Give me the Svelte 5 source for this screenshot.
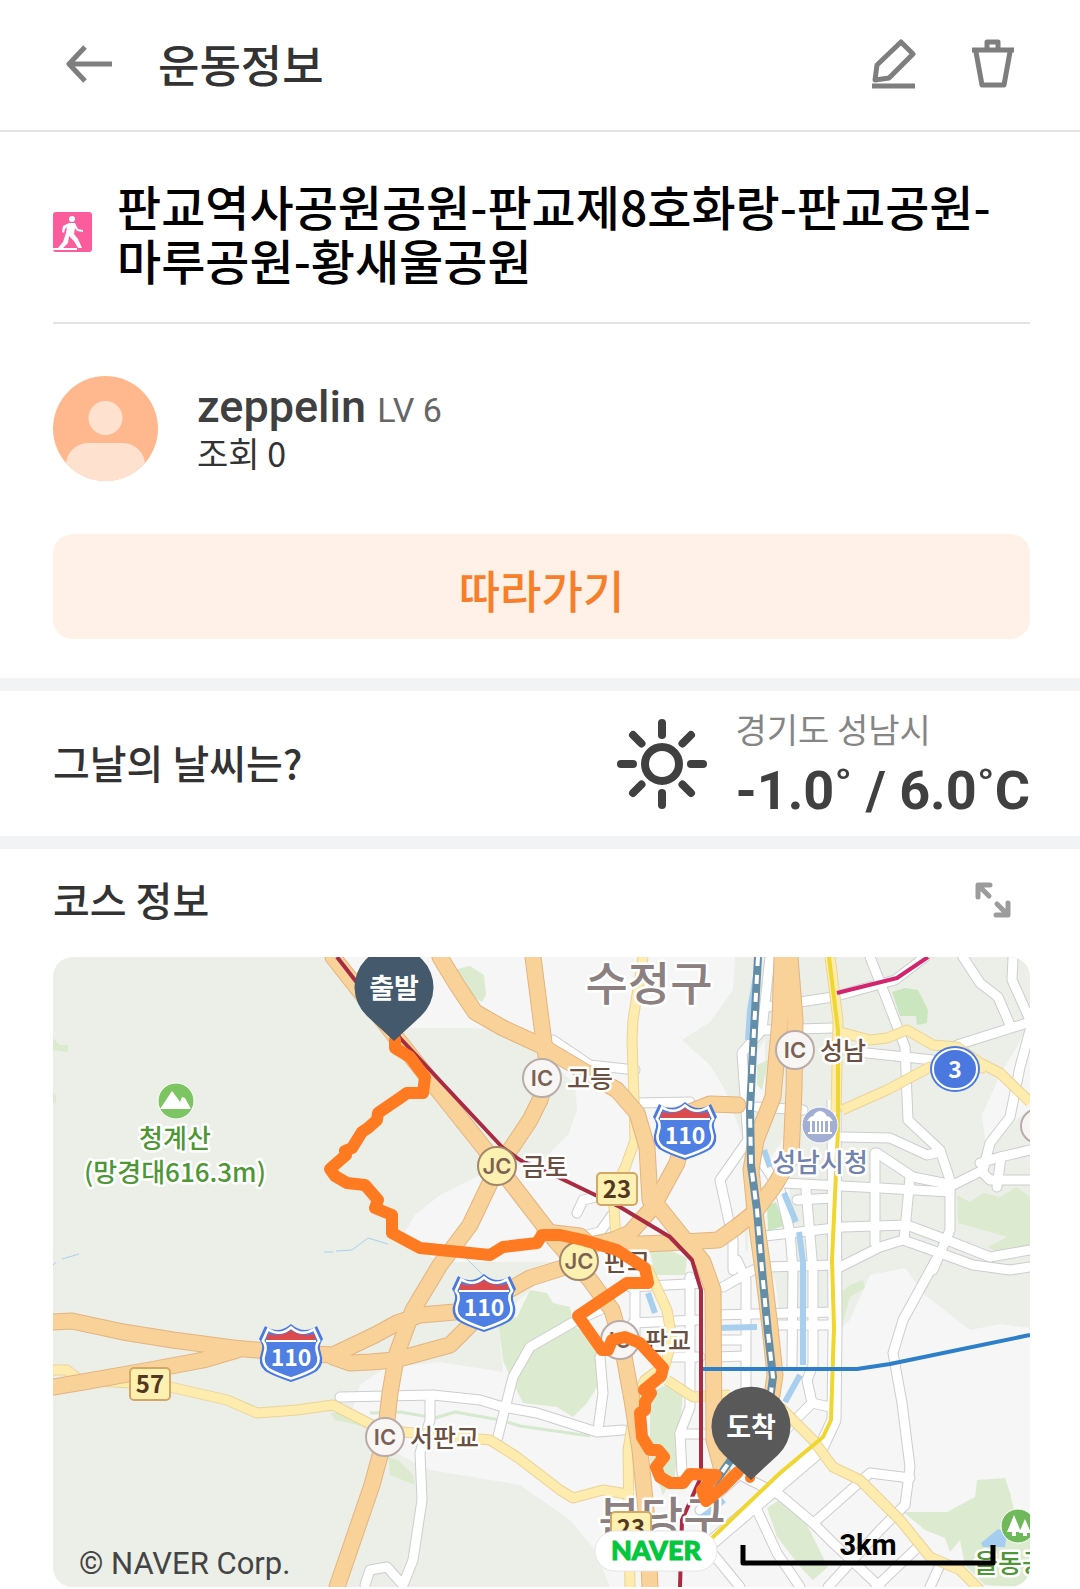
<script lang="ts">
	const workout = {
		title: '판교역사공원공원-판교제8호화랑-판교공원-마루공원-황새울공원',
		user: 'zeppelin',
		level: 6,
		views: 0
	};

	const weather = { place: '경기도 성남시', low: -1, high: 6 };

	// map shapes, all in the same coordinates as the viewBox
	const hills = [
		'53,957 335,957 400,1028 470,1028 520,1030 575,1085 577,1110 568,1135 545,1158 480,1175 440,1195 415,1215 400,1240 440,1262 560,1262 530,1290 498,1320 503,1372 440,1362 385,1368 360,1385 352,1410 390,1450 430,1470 520,1485 570,1520 595,1550 610,1587 53,1587',
		'735,957 1030,957 1030,1328 1000,1324 970,1330 925,1295 905,1268 870,1275 850,1320 840,1328 830,1310 780,1315 775,1280 745,1250 745,1150 740,1130 725,1090 710,1065 682,1040 710,1022 733,990'
	];
	const clearings = [
		'1030,1020 1018,1045 1000,1075 982,1115 985,1140 1000,1130 1030,1110',
		'748,1190 790,1130 790,1270 748,1270',
		'752,1060 765,1040 765,1110 752,1110'
	];
	const parks = [
		'453,970 470,966 484,975 486,995 482,1002 470,995',
		'757,1065 768,1060 762,1090 757,1085',
		'957,1195 970,1202 983,1193 1000,1197 1017,1187 1030,1197 1030,1247 997,1252 988,1247 1007,1237 983,1230 958,1223',
		'840,1293 850,1285 863,1280 865,1288 850,1297 842,1325',
		'903,1512 947,1512 975,1497 977,1480 1005,1478 1010,1493 1014,1510 1030,1530 1030,1587 985,1585 965,1565 960,1540 950,1552 945,1538 925,1530',
		'767,1508 782,1498 803,1517 828,1567 813,1580 803,1570 777,1537',
		'498,1320 517,1317 530,1290 547,1293 553,1303 570,1307 573,1325 600,1345 600,1357 597,1387 587,1403 573,1417 557,1407 523,1403 510,1377 503,1360',
		'650,1393 670,1383 683,1393 680,1427 675,1475 663,1495 650,1460',
		'650,1252 670,1250 687,1258 685,1275 655,1275',
		'53,1038 60,1045 68,1045 68,1052 53,1050',
		'53,1093 56,1095 56,1103 53,1104',
		'388,1457 398,1460 413,1475 415,1485 390,1475',
		'330,1413 345,1413 372,1424 370,1428 335,1420'
	];
	const groves = [
		'892,992 905,988 918,990 928,1010 927,1023 917,1025 916,1016 900,1016',
		'767,1206 776,1202 784,1226 768,1231'
	];
	const streams = [
		'784,1193 796,1222',
		'799,1232 803,1262 803,1365',
		'764,1150 770,1167',
		'800,1375 785,1402',
		'715,1328 757,1327',
		'648,1293 655,1313',
		'758,965 750,1010 748,1040',
		'724,1500 710,1512 700,1518'
	];
	const streets = [
		'553,1040 590,1065 635,1070',
		'637,1103 690,1102',
		'577,1213 583,1200 605,1195',
		'587,1235 600,1232 612,1215',
		'767,1007 833,997 895,980 925,957',
		'870,957 887,1000 905,1047 908,1120 940,1150 950,1180 950,1230 933,1270',
		'963,957 980,983 998,997 1010,1025',
		'1013,957 1012,980 1030,1020',
		'957,1045 1030,1022',
		'867,1053 933,1060',
		'765,1030 833,1028',
		'770,957 762,1030 742,1053 748,1140 720,1180 733,1240 733,1270',
		'757,1107 803,1110',
		'843,1137 890,1138 927,1155 940,1152',
		'877,1153 913,1177 953,1185 983,1170 990,1143 1010,1117 1020,1067 1030,1030',
		'980,1163 1000,1157 1030,1150',
		'983,1173 990,1180 1030,1180',
		'1001,1157 997,1187',
		'783,1183 880,1188 950,1192',
		'797,1200 833,1198',
		'765,1236 843,1227 907,1225 947,1240 990,1257 1030,1250',
		'875,1153 875,1243',
		'910,1177 904,1240',
		'840,1267 880,1247 903,1240 940,1253 973,1265 1010,1270 1030,1267',
		'767,1267 833,1265',
		'755,1150 780,1190 790,1233 793,1270 792,1365',
		'806,1190 813,1270 813,1365 807,1380 812,1403 830,1407',
		'812,1403 760,1456 700,1510',
		'737,1260 746,1280 746,1400',
		'723,1287 753,1270',
		'715,1315 835,1312',
		'715,1340 745,1340',
		'715,1357 745,1356',
		'775,1325 835,1325',
		'937,1258 903,1320 893,1353 902,1403 910,1467 905,1505 880,1530 828,1587',
		'817,1520 870,1473 910,1478',
		'740,1475 780,1495 813,1523 833,1543 880,1587',
		'757,1510 777,1553 800,1587',
		'700,1538 740,1587',
		'920,1545 876,1587',
		'940,1565 930,1587',
		'340,1397 433,1395 480,1400 503,1407 537,1413 597,1432 623,1430',
		'497,1440 513,1377 530,1347 577,1320 600,1310',
		'600,1357 603,1393 598,1430',
		'430,1397 430,1420 420,1453 422,1500 413,1560 403,1585 387,1567 370,1570 365,1585',
		'630,1287 705,1283',
		'635,1287 635,1340',
		'690,1277 690,1407 680,1433 682,1473',
		'633,1323 697,1320',
		'665,1357 700,1357',
		'680,1434 710,1434',
		'655,1563 700,1563'
	];
	const avenues = ['834,1100 835,1330 834,1420 820,1450 705,1548'];
	const highways = [
		'643,957 633,1020 632,1040 634,1100 635,1140 625,1168 613,1190 616,1240',
		'830,957 838,1020 836,1112',
		'840,1032 870,1040 887,1038 907,1030 933,1045 957,1047 980,1063 1000,1073 1030,1102',
		'842,1110 887,1090 930,1067 985,1068',
		'53,1370 67,1370 80,1380 130,1383 170,1387 227,1400 257,1413 297,1410 333,1405 372,1425 403,1432 490,1440 517,1457 560,1490 573,1498 603,1490 633,1495',
		'647,1267 667,1310 672,1340 665,1365 645,1380 637,1395 628,1450 630,1587',
		'667,1380 693,1397 730,1395',
		'780,1407 813,1440 833,1467 860,1480 900,1520 930,1557 960,1570 980,1590'
	];
	const motorways = [
		'333,957 395,1036 488,1153 555,1240 590,1280 612,1310 622,1345 632,1400 640,1450 647,1520 650,1587',
		'440,957 457,985 475,1012 503,1028 540,1045 587,1073 617,1090 637,1113 647,1147 650,1200',
		'533,957 543,1035 548,1070 540,1100 530,1120 510,1150 498,1166 470,1225 440,1265 413,1310 397,1353 390,1393 385,1437 372,1485 337,1587',
		'53,1322 72,1321 123,1332 173,1340 233,1348 290,1353 333,1355 375,1335 397,1323 420,1315 455,1312 500,1295 530,1278 575,1264',
		'53,1387 83,1382 150,1370 203,1360 237,1350',
		'333,1357 350,1363 370,1362 395,1360 450,1345 470,1325',
		'545,1232 580,1236 590,1245 613,1240 630,1233 653,1207 677,1163 690,1112 710,1104 738,1105',
		'653,1200 685,1240 703,1262 713,1290 714,1440 722,1470',
		'615,1245 665,1243 718,1240 735,1228 755,1212 775,1185 791,1157 794,1090 795,1020 790,957',
		'782,957 780,1020 773,1097 756,1140 751,1170 756,1220 763,1270 770,1327 775,1375 772,1395'
	];
	const railway = '758,957 754,1030 750,1110 751,1165 757,1210 762,1270 768,1333 773,1377 770,1400 745,1440 718,1478 700,1500';

	const metro = [
		{ line: 'shinbundang', points: '337,957 400,1038 502,1147 520,1160 560,1178 620,1207 670,1237 692,1260 701,1290 701,1477 682,1520 680,1587' },
		{ line: 'suin', points: '829,957 838,1030 838,1130 832,1260 834,1327 831,1420 823,1437 780,1473 713,1537 700,1548' },
		{ line: 'line8', points: '837,993 897,978 928,957' },
		{ line: 'gyeonggang', points: '703,1369 857,1369 890,1364 1030,1335' }
	];

	const route =
		'395,1040 395,1048 410,1057 425,1077 423,1093 407,1093 400,1098 378,1113 377,1120 368,1128 362,1132 352,1148 345,1151 346,1155 330,1169 335,1176 347,1183 365,1185 378,1200 375,1208 392,1215 392,1233 420,1248 490,1255 503,1247 537,1243 542,1235 560,1235 583,1240 617,1250 645,1268 648,1283 627,1283 578,1316 602,1350 608,1350 612,1340 625,1337 640,1343 663,1368 661,1376 644,1390 651,1393 645,1402 645,1410 640,1413 642,1437 650,1450 658,1450 664,1457 656,1467 660,1477 670,1483 683,1483 690,1474 716,1475 702,1490 706,1501 723,1487 738,1472';

	const junctions = [
		{ x: 542, y: 1078, kind: 'IC', name: '고등' },
		{ x: 497, y: 1166, kind: 'JC', name: '금토' },
		{ x: 579, y: 1261, kind: 'JC', name: '판교' },
		{ x: 620, y: 1340, kind: 'IC', name: '판교' },
		{ x: 385, y: 1437, kind: 'IC', name: '서판교' },
		{ x: 795, y: 1050, kind: 'IC', name: '성남' }
	];
	const shields = [
		{ x: 685, y: 1131 },
		{ x: 291, y: 1353 },
		{ x: 484, y: 1303 }
	];
	const plates = [
		{ x: 617, y: 1189, no: 23 },
		{ x: 150, y: 1384, no: 57 },
		{ x: 631, y: 1528, no: 23 }
	];
	const pins = [
		{ kind: 'start', x: 394, y: 987, label: '출발' },
		{ kind: 'end', x: 751, y: 1426, label: '도착' }
	];

	const shield = 'M0-29Q-7-23-14-23Q-20-23-26-27L-32-14Q-27-8-30 0Q-34 11-26 18Q-18 23 0 29Q18 23 26 18Q34 11 30 0Q27-8 32-14L26-27Q20-23 14-23Q7-23 0-29Z';
</script>

<header class="topbar">
	<button class="icon" aria-label="뒤로">
		<svg width="46" height="40" viewBox="0 0 46 40">
			<path d="M46 20H4M19 3 3 20l16 17" />
		</svg>
	</button>
	<h1>운동정보</h1>
	<button class="icon" aria-label="수정">
		<svg width="44" height="50" viewBox="0 0 44 50">
			<path d="M29 3 41 15 17 39 3 41 5 26Z" /><path d="M0 47H43" />
		</svg>
	</button>
	<button class="icon" aria-label="삭제">
		<svg width="46" height="50" viewBox="0 0 46 50">
			<path d="M2 11H44M6 13l6 33H34L40 13" /><path d="M17 10V3H28V10" />
		</svg>
	</button>
</header>

<section class="summary">
	<div class="title">
		<svg width="39" height="40" viewBox="0 0 39 40">
			<rect width="39" height="40" rx="3" fill="#fb5d9c" />
			<circle cx="19" cy="7" r="3" fill="#fff" />
			<path d="M16 11h6l3 6 5 1v2l-6-1-2-3-1 6 4 5 4 9h-4l-4-7-5-5-1 7-5 5H5l5-6 3-9 1-6-2 2-1 4-2-1 1-6Z" fill="#fff" />
			<path d="M0 37H24" stroke="#fff" stroke-width="2" />
		</svg>
		<h2>{workout.title}</h2>
	</div>

	<div class="profile">
		<svg width="105" height="105" viewBox="0 0 105 105">
			<clipPath id="avatar"><circle cx="52.5" cy="52.5" r="52.5" /></clipPath>
			<g clip-path="url(#avatar)">
				<rect width="105" height="105" fill="#ffb88d" />
				<circle cx="52.5" cy="42" r="17" fill="#ffe1d0" />
				<rect x="13" y="67" width="79" height="60" rx="22" fill="#ffe1d0" />
			</g>
		</svg>
		<div>
			<p class="name">{workout.user} <span>LV {workout.level}</span></p>
			<p class="views">조회 {workout.views}</p>
		</div>
	</div>

	<button class="follow">따라가기</button>
</section>

<section class="weather">
	<h3>그날의 날씨는?</h3>
	<svg width="90" height="90" viewBox="-45 -45 90 90">
		<circle r="17" />
		{#each [0, 45, 90, 135, 180, 225, 270, 315] as angle}
			<path d="M0-29V-41" transform="rotate({angle})" />
		{/each}
	</svg>
	<div>
		<p class="place">{weather.place}</p>
		<p class="temp">{weather.low.toFixed(1)}˚ / {weather.high.toFixed(1)}˚C</p>
	</div>
</section>

<section class="course">
	<div class="courseHead">
		<h3>코스 정보</h3>
		<button class="icon" aria-label="지도 확대">
			<svg class="expand" width="36" height="36" viewBox="0 0 36 36">
				<path d="M3 15V3H15M4 4 14 14M33 21V33H21M32 32 22 22" />
			</svg>
		</button>
	</div>

	<svg class="map" viewBox="53 957 977 630" preserveAspectRatio="xMidYMid slice">
		<rect x="53" y="957" width="977" height="630" fill="#f6f6f6" />
		{#each hills as points}<polygon {points} fill="#ecefe8" />{/each}
		{#each clearings as points}<polygon {points} fill="#f6f6f6" />{/each}
		{#each parks as points}<polygon {points} fill="#dcebcf" />{/each}
		{#each groves as points}<polygon {points} fill="#c9e6bf" />{/each}
		<polygon points="981,1543 998,1529 1007,1533 1005,1547 983,1547" fill="#a5cdf0" />
		<path class="trail" d="M370 1413 400 1412 435 1418 455 1412 500 1420 520 1426 590 1436" />
		<path class="brook" d="M324 1252h9M336 1251 352 1250 368 1238 388 1244M465 1257 484 1276M53 1265l3-3M62 1259l17-5" />

		{#each streets as points}<polyline class="street casing" {points} />{/each}
		{#each avenues as points}<polyline class="avenue casing" {points} />{/each}
		{#each streets as points}<polyline class="street" {points} />{/each}
		{#each avenues as points}<polyline class="avenue" {points} />{/each}
		{#each streams as points}<polyline class="stream" {points} />{/each}
		{#each highways as points}<polyline class="highway casing" {points} />{/each}
		{#each highways as points}<polyline class="highway" {points} />{/each}
		{#each motorways as points}<polyline class="motorway casing" {points} />{/each}
		{#each motorways as points}<polyline class="motorway" {points} />{/each}
		<polyline class="rail" points={railway} />
		<polyline class="rail ties" points={railway} />
		{#each metro as m}<polyline class="metro {m.line}" points={m.points} />{/each}

		<text class="district" x="649" y="1000">수정구</text>
		<text class="district" x="662" y="1535">분당구</text>

		{#each junctions as j}
			<circle class="junction {j.kind}" cx={j.x} cy={j.y} r="19" />
			<text class="kind" x={j.x} y={j.y + 8}>{j.kind}</text>
			<text class="place" x={j.x + 25} y={j.y + 10}>{j.name}</text>
		{/each}
		<circle class="junction" cx="1038" cy="1126" r="17" />

		{#each shields as s}
			<g transform="translate({s.x} {s.y})">
				<path d={shield} fill="#4a7ae0" />
				<path d={shield} fill="#4f7fe3" stroke="#fff" stroke-width="3" transform="scale(.88)" />
				<path d="M-24-13V-19Q-8-16 0-23Q8-16 24-19V-13Z" fill="#dc4a4e" />
				<path d="M-25-12H25" stroke="#fff" stroke-width="2" />
				<text class="shieldNo" y="13">110</text>
			</g>
		{/each}

		{#each plates as p}
			<rect class="plate" x={p.x - 20} y={p.y - 16} width="40" height="32" rx="4" />
			<text class="plateNo" x={p.x} y={p.y + 9}>{p.no}</text>
		{/each}

		<ellipse cx="955" cy="1069" rx="25" ry="23" fill="#4a7ae0" />
		<ellipse cx="955" cy="1069" rx="22" ry="20" fill="#4a78de" stroke="#fff" stroke-width="2" />
		<text class="shieldNo" x="955" y="1078">3</text>

		<circle class="poi" cx="176" cy="1101" r="18" fill="#7dc462" />
		<path d="M160 1109 172 1091 178 1099 180 1102 182 1097 185 1098 191 1109Z" fill="#fff" />
		<text class="poiName green" x="175" y="1148">청계산</text>
		<text class="poiName green" x="175" y="1182">(망경대616.3m)</text>

		<circle class="poi" cx="820" cy="1125" r="18" fill="#a3aed5" />
		<path d="M809 1120h22q-2-3-5-3-1-4-6-5-5 1-6 5-3 0-5 3ZM811 1120v12M816 1120v12M820 1120v12M824 1120v12M829 1120v12M808 1133h24" fill="#fff" stroke="#fff" stroke-width="2" />
		<text class="poiName blue" x="820" y="1172">성남시청</text>

		<circle class="poi" cx="1018" cy="1526" r="17" fill="#6fb95b" />
		<path d="M1014 1515l7 17h-5v4h-4v-4h-5ZM1025 1519l6 14h-4v3h-4v-3h-4Z" fill="#fff" />
		<text class="poiName green" x="1010" y="1573">을동공</text>

		<polyline class="route" points={route} />
		<circle cx="750" cy="1478" r="5" fill="#ff7a20" />

		{#each pins as pin}
			<g class="pin {pin.kind}" transform="translate({pin.x} {pin.y})">
				<path d="M0 54 27 29A39.5 39.5 0 1 0-27 29Z" />
				<text y="11">{pin.label}</text>
			</g>
		{/each}

		<text class="copyright" x="79" y="1574">© NAVER Corp.</text>
		<rect class="badge" x="595" y="1531" width="122" height="40" rx="20" />
		<text class="naver" x="656" y="1560">NAVER</text>
		<path class="scale" d="M743 1545V1563H993V1545" />
		<text class="distance" x="868" y="1555">3km</text>
	</svg>
</section>

<style>
	:global(body) {
		background: #fff;
		color: #333;
		font-family: 'Noto Sans CJK KR', sans-serif;
	}

	h1,
	h2,
	h3,
	p {
		margin: 0;
		font-weight: 500;
	}

	button {
		border: 0;
		padding: 0;
		font-family: inherit;
	}

	.icon {
		display: flex;
		background: none;
	}

	.icon path {
		fill: none;
		stroke: #7e7e7e;
		stroke-width: 5;
		stroke-linejoin: round;
	}

	.topbar {
		display: flex;
		align-items: center;
		gap: 54px;
		height: 127px;
		padding: 0 64px 3px 66px;
		border-bottom: 2px solid #e4e4e4;
	}

	.topbar h1 {
		flex: 1;
		margin-left: -8px;
		font-size: 45px;
		line-height: 54px;
	}

	.summary {
		padding: 0 50px 39px 53px;
	}

	.title {
		display: flex;
		align-items: center;
		gap: 25px;
		padding: 46px 0 36px;
		border-bottom: 2px solid #e4e4e4;
	}

	.title svg {
		flex: none;
	}

	.title h2 {
		color: #000;
		font-size: 48px;
		line-height: 54px;
	}

	.profile {
		display: flex;
		align-items: center;
		gap: 39px;
		padding: 52px 0 53px;
	}

	.name {
		color: #404040;
		font: 500 45px/46px Roboto, sans-serif;
	}

	.name span {
		color: #666;
		font-size: 34px;
		font-weight: 400;
	}

	.views {
		font-size: 34px;
		font-weight: 400;
		line-height: 40px;
	}

	.follow {
		display: block;
		width: 100%;
		height: 105px;
		padding-top: 6px;
		border-radius: 20px;
		background: #fff0e8;
		color: #f77f2c;
		font-size: 45px;
		font-weight: 500;
	}

	.weather {
		display: flex;
		align-items: center;
		gap: 28px;
		height: 145px;
		padding: 0 50px 0 53px;
		border: solid #f1f3f5;
		border-width: 13px 0;
	}

	.weather svg {
		fill: none;
		stroke: #404040;
		stroke-width: 8;
		stroke-linecap: round;
	}

	h3 {
		flex: 1;
		padding-bottom: 3px;
		font-size: 40px;
		line-height: 54px;
	}

	.weather .place {
		margin-bottom: 4px;
		color: #858585;
		font-size: 34px;
		font-weight: 400;
		line-height: 50px;
	}

	.temp {
		color: #404040;
		font: 700 54px/66px Roboto, sans-serif;
	}

	.courseHead {
		display: flex;
		align-items: center;
		height: 102px;
		padding: 0 69px 6px 53px;
	}

	.icon .expand path {
		stroke: #9c9c9c;
		stroke-linecap: round;
	}

	.course {
		padding-bottom: 2px;
	}

	.map {
		display: block;
		width: calc(100% - 103px);
		height: 630px;
		margin-left: 53px;
		border-radius: 20px;
	}

	.map polyline,
	.trail,
	.brook,
	.scale {
		fill: none;
		stroke-linejoin: round;
	}

	.street {
		stroke: #fff;
		stroke-width: 9;
		stroke-linecap: round;
	}

	.street.casing {
		stroke: #cdcdd0;
		stroke-width: 11;
	}

	.avenue {
		stroke: #fff;
		stroke-width: 13;
	}

	.avenue.casing {
		stroke: #cdcdd0;
		stroke-width: 15;
	}

	.highway {
		stroke: #fdecae;
		stroke-width: 9;
	}

	.highway.casing {
		stroke: #ead39a;
		stroke-width: 11;
	}

	.motorway {
		stroke: #f8d298;
		stroke-width: 15;
		stroke-linecap: round;
	}

	.motorway.casing {
		stroke: #e2b480;
		stroke-width: 17;
	}

	.stream {
		stroke: #a9cfee;
		stroke-width: 6;
	}

	.brook {
		stroke: #a9cfee;
		stroke-width: 1;
	}

	.trail {
		stroke: #d5e9cf;
		stroke-width: 3;
	}

	.rail {
		stroke: #648da8;
		stroke-width: 8;
	}

	.rail.ties {
		stroke: #fff;
		stroke-width: 4;
		stroke-dasharray: 9 9;
	}

	.metro {
		stroke-width: 4;
	}

	.shinbundang {
		stroke: #a92b43;
	}

	.suin {
		stroke: #f0d630;
	}

	.line8 {
		stroke: #d3256d;
	}

	.gyeonggang {
		stroke: #2d7fc9;
	}

	.map text {
		paint-order: stroke;
		stroke-linejoin: round;
		text-anchor: middle;
		font-weight: 500;
	}

	.map .district {
		fill: #8c8080;
		stroke: #fff;
		stroke-width: 5;
		font-size: 46px;
	}

	.junction {
		fill: #f8f6f5;
		stroke: #b9aba8;
		stroke-width: 2;
	}

	.junction.JC {
		fill: #fdf1b2;
		stroke: #a3876a;
	}

	.map .kind {
		fill: #7b6253;
		font: 600 22px Inter, sans-serif;
	}

	.map .place {
		fill: #6b4f40;
		stroke: #fff;
		stroke-width: 5;
		font-size: 25px;
		text-anchor: start;
	}

	.map .shieldNo {
		fill: #fff;
		font-size: 23px;
		font-weight: 700;
	}

	.plate {
		fill: #fdf0b0;
		stroke: #d3a766;
		stroke-width: 2;
	}

	.map .plateNo {
		fill: #53371f;
		font-size: 24px;
		font-weight: 700;
	}

	.poi {
		stroke: #fff;
		stroke-width: 1;
	}

	.map .poiName {
		stroke: #fff;
		stroke-width: 5;
		font-size: 26px;
	}

	.green {
		fill: #4e9636;
	}

	.blue {
		fill: #7283b0;
	}

	.route {
		stroke: #ff7a20;
		stroke-width: 12;
		stroke-linecap: round;
	}

	.map .pin text {
		fill: #fff;
		font-size: 27px;
		font-weight: 700;
	}

	.start {
		fill: #44596c;
	}

	.end {
		fill: #595959;
	}

	.map .copyright {
		fill: #444;
		font: 400 31px Roboto, sans-serif;
		text-anchor: start;
	}

	.badge {
		fill: #fff;
		stroke: #e6e6e6;
		stroke-width: 1;
	}

	.map .naver {
		fill: #03c73c;
		stroke: #03c73c;
		stroke-width: 1;
		font: 900 27px Lato, sans-serif;
	}

	.scale {
		stroke: #000;
		stroke-width: 5;
	}

	.map .distance {
		fill: #000;
		font: 700 29px Roboto, sans-serif;
	}
</style>
